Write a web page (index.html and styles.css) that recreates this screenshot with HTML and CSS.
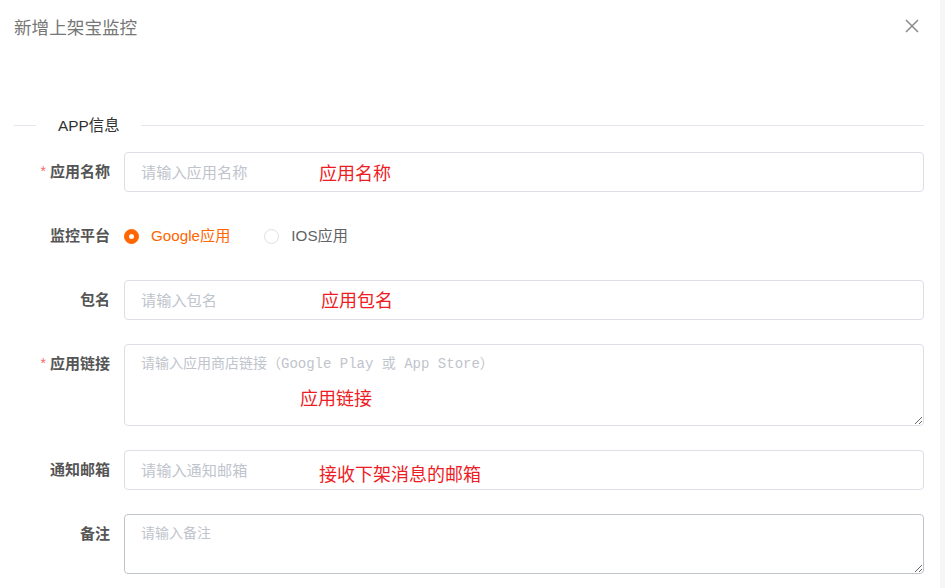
FILE: index.html
```html
<!DOCTYPE html>
<html lang="zh-CN">
<head>
<meta charset="utf-8">
<title>新增上架宝监控</title>
<link rel="stylesheet" href="styles.css">
</head>
<body>
<div class="page">
  <div class="dialog">
    <div class="header">
      <span class="title">新增上架宝监控</span>
      <button class="close" aria-label="关闭">
        <svg width="14" height="14" viewBox="0 0 14 14"><path d="M1 1 L13 13 M13 1 L1 13" stroke="#8a8a8a" stroke-width="1.5" fill="none"/></svg>
      </button>
    </div>

    <div class="divider">
      <span class="divider-line short"></span>
      <span class="divider-text">APP信息</span>
      <span class="divider-line"></span>
    </div>

    <form class="form">
      <div class="row">
        <label class="label"><span class="req">*</span><span>应用名称</span></label>
        <div class="field">
          <input class="input" type="text" placeholder="请输入应用名称">
          <span class="note n1">应用名称</span>
        </div>
      </div>

      <div class="row">
        <label class="label"><span>监控平台</span></label>
        <div class="field radios">
          <span class="radio checked"><span class="dot"></span>Google应用</span>
          <span class="radio"><span class="dot"></span>IOS应用</span>
        </div>
      </div>

      <div class="row">
        <label class="label"><span>包名</span></label>
        <div class="field">
          <input class="input" type="text" placeholder="请输入包名">
          <span class="note n2">应用包名</span>
        </div>
      </div>

      <div class="row">
        <label class="label"><span class="req">*</span><span>应用链接</span></label>
        <div class="field">
          <textarea class="textarea tall" placeholder="请输入应用商店链接（Google Play 或 App Store）"></textarea>
          <span class="note n3">应用链接</span>
        </div>
      </div>

      <div class="row">
        <label class="label"><span>通知邮箱</span></label>
        <div class="field">
          <input class="input" type="text" placeholder="请输入通知邮箱">
          <span class="note n4">接收下架消息的邮箱</span>
        </div>
      </div>

      <div class="row">
        <label class="label"><span>备注</span></label>
        <div class="field">
          <textarea class="textarea short dark" placeholder="请输入备注"></textarea>
        </div>
      </div>
    </form>
  </div>
  <div class="track"></div>
</div>
</body>
</html>
```

FILE: styles.css
```css
* { box-sizing: border-box; }
html, body { margin: 0; padding: 0; background: #fff; }
body {
  font-family: "Noto Sans CJK SC", "Liberation Sans", sans-serif;
  color: #606266;
}
.page {
  display: flex;
  width: 945px;
  height: 588px;
  overflow: hidden;
}
.dialog {
  flex: 1;
  padding: 0 16px 0 14px;
}
.track {
  width: 5px;
  background: #f5f6f7;
}
.header {
  height: 53px;
  display: flex;
  align-items: center;
  justify-content: space-between;
}
.title {
  font-size: 17.6px;
  line-height: 24px;
  color: #777;
}
.close {
  border: 0;
  background: none;
  padding: 0;
  margin-right: 5px;
  margin-top: -1px;
  width: 14px;
  height: 14px;
  display: flex;
}
.divider {
  margin-top: 62px;
  height: 20px;
  display: flex;
  align-items: center;
  margin-bottom: 17px;
}
.divider-line {
  flex: 1;
  height: 1px;
  background: #e4e7ed;
}
.divider-line.short { flex: 0 0 22px; }
.divider-text {
  padding: 0 21px 0 22px;
  font-family: "Liberation Sans", "Noto Sans CJK SC", sans-serif;
  font-size: 15.4px;
  line-height: 20px;
  color: #303133;
  margin-top: 1px;
}
.row {
  display: flex;
  margin-bottom: 24px;
}
.label {
  flex: 0 0 110px;
  height: 40px;
  padding: 0 14px 3px 0;
  display: flex;
  justify-content: flex-end;
  align-items: center;
  font-size: 15px;
  font-weight: bold;
  color: #555;
}
.req {
  color: #f56c6c;
  font-weight: normal;
  margin-right: 4px;
  font-family: "Liberation Sans", sans-serif;
  font-size: 14px;
}
.field {
  flex: 1;
  position: relative;
}
.input, .textarea {
  display: block;
  width: 100%;
  border: 1px solid #dcdfe6;
  border-radius: 4px;
  background: #fff;
  color: #606266;
  outline: none;
}
.input {
  height: 40px;
  padding: 0 16px 3px;
  font-family: "Noto Sans CJK SC", sans-serif;
  font-size: 15.2px;
}
.input::placeholder { color: #c0c4cc; }
.textarea {
  padding: 7px 16px 6px;
  font-family: "Liberation Mono", "Noto Sans CJK SC", monospace;
  font-size: 14px;
  line-height: 24px;
  resize: vertical;
}
.textarea::placeholder { color: #c0c4cc; }
.textarea.tall { height: 82px; }
.textarea.short { height: 60px; }
.textarea.dark { border-color: #c0c4cc; }
.note {
  position: absolute;
  color: #ee1c25;
  font-size: 18px;
  line-height: 20px;
  white-space: nowrap;
  pointer-events: none;
}
.n1 { left: 195px; top: 10px; }
.n2 { left: 197px; top: 9px; }
.n3 { left: 176px; top: 43px; }
.n4 { left: 195px; top: 13px; }
.radios {
  display: flex;
  align-items: center;
  height: 40px;
}
.radio {
  display: inline-flex;
  align-items: center;
  font-family: "Liberation Sans", "Noto Sans CJK SC", sans-serif;
  font-size: 15.2px;
  line-height: 20px;
  color: #606266;
  margin-right: 34px;
}
.radio .dot {
  width: 15px;
  height: 15px;
  border-radius: 50%;
  border: 1px solid #dcdfe6;
  background: #fff;
  margin-right: 12px;
  position: relative;
}
.radio.checked { color: #ff6600; }
.radio.checked .dot {
  border-color: #ff6600;
  background: #ff6600;
}
.radio.checked .dot::after {
  content: "";
  position: absolute;
  left: 50%;
  top: 50%;
  width: 5px;
  height: 5px;
  margin: -2.5px 0 0 -2.5px;
  border-radius: 50%;
  background: #fff;
}
```
